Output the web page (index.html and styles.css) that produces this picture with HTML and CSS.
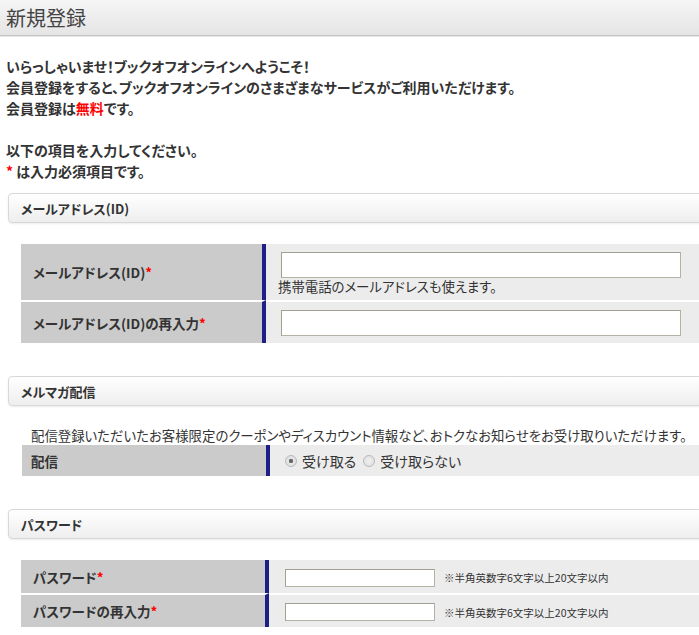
FILE: index.html
```html
<!DOCTYPE html>
<html lang="ja">
<head>
<meta charset="utf-8">
<title>新規登録</title>
<link rel="stylesheet" href="styles.css">
</head>
<body>
<header class="page-head">
  <h1 class="page-title">新規登録</h1>
</header>

<div class="intro">
  <p>いらっしゃいませ！ブックオフオンラインへようこそ！<br>会員登録をすると、ブックオフオンラインのさまざまなサービスがご利用いただけます。<br>会員登録は<span class="red">無料</span>です。</p>
  <p>以下の項目を入力してください。<br><span class="req">*</span> は入力必須項目です。</p>
</div>

<section class="section section-mail">
  <h2 class="section-head">メールアドレス(ID)</h2>
  <table class="form-table table-mail">
    <tr class="row-mail">
      <th class="label">メールアドレス(ID)<span class="req">*</span></th>
      <td class="field"><input class="input-wide" type="text"><p class="help">携帯電話のメールアドレスも使えます。</p></td>
    </tr>
    <tr class="row-mail2">
      <th class="label">メールアドレス(ID)の再入力<span class="req">*</span></th>
      <td class="field"><input class="input-wide" type="text"></td>
    </tr>
  </table>
</section>

<section class="section section-magazine">
  <h2 class="section-head">メルマガ配信</h2>
  <p class="desc">配信登録いただいたお客様限定のクーポンやディスカウント情報など、おトクなお知らせをお受け取りいただけます。</p>
  <table class="form-table table-magazine">
    <tr class="row-radio">
      <th class="label">配信</th>
      <td class="field">
        <label class="radio"><input type="radio" name="mag" checked>受け取る</label>
        <label class="radio"><input type="radio" name="mag">受け取らない</label>
      </td>
    </tr>
  </table>
</section>

<section class="section section-pass">
  <h2 class="section-head">パスワード</h2>
  <table class="form-table table-pass">
    <tr class="row-pass">
      <th class="label">パスワード<span class="req">*</span></th>
      <td class="field"><input class="input-short" type="password"><span class="note">※半角英数字6文字以上20文字以内</span></td>
    </tr>
    <tr class="row-pass">
      <th class="label">パスワードの再入力<span class="req">*</span></th>
      <td class="field"><input class="input-short" type="password"><span class="note">※半角英数字6文字以上20文字以内</span></td>
    </tr>
  </table>
</section>
</body>
</html>
```

FILE: styles.css
```css
html, body {
  margin: 0;
  padding: 0;
  overflow: hidden;
  background: #fff;
}
body {
  font-family: "Noto Sans CJK JP", "Noto Sans", sans-serif;
  color: #333;
  font-size: 13px;
  font-feature-settings: "palt";
}

.page-head {
  height: 35px;
  background: linear-gradient(#f5f5f5, #e5e5e5);
  border-bottom: 1px solid #c4c4c4;
  box-shadow: 0 1px 0 #e6e6e6;
  display: flex;
  align-items: center;
}
.page-title {
  margin: 0 0 0 6px;
  font-size: 20px;
  font-weight: normal;
  color: #444;
  line-height: 1;
}

.intro {
  margin: 20px 0 0 6px;
  font-size: 14px;
  font-weight: bold;
  line-height: 21px;
}
.intro p {
  margin: 0 0 21px;
}
.intro p:last-child { margin-bottom: 0; }

.red, .req { color: #f00; }
.req { font-weight: bold; }

.section {
  padding-left: 8px;
}
.section-mail { margin-top: 11px; }
.section-magazine { margin-top: 33px; }
.section-pass { margin-top: 33px; }

.section-head {
  margin: 0 -10px 0 0;
  height: 30px;
  box-sizing: border-box;
  border: 1px solid #d8d8d8;
  border-radius: 4px;
  background: linear-gradient(#fff, #eeeeee);
  box-shadow: 0 1px 2px rgba(0,0,0,0.08);
  font-size: 13px;
  font-weight: bold;
  display: flex;
  align-items: center;
  padding-left: 12px;
}

.form-table {
  border-collapse: separate;
  border-spacing: 0;
  margin-left: 13px;
  width: calc(100% - 13px);
}
.table-mail { margin-top: 21px; }
.table-pass { margin-top: 21px; }

.label {
  background: #cbcbcb;
  border-right: 4px solid #1d1f86;
  text-align: left;
  font-weight: bold;
  font-size: 13.5px;
  padding: 0 0 0 12px;
  vertical-align: middle;
  white-space: nowrap;
  box-sizing: border-box;
}
.field {
  background: #ececec;
  vertical-align: middle;
  padding: 0 0 0 15px;
  box-sizing: border-box;
}
tr + tr > .label, tr + tr > .field {
  border-top: 2px solid #fff;
}

.table-mail .label { width: 245px; }
.row-mail > th, .row-mail > td { height: 56px; }
.row-mail .field { padding-top: 8px; padding-bottom: 6px; }
.row-mail2 > th, .row-mail2 > td { height: 43px; }

.input-wide {
  display: block;
  width: 400px;
  height: 26px;
  box-sizing: border-box;
  border: 1px solid #b5b1a5;
  border-top-color: #a39f92;
  border-left-color: #a39f92;
  background: #fff;
  margin: 0;
}
.help {
  margin: 0 0 0 -3px;
  font-size: 13.4px;
  line-height: 16px;
}

.desc {
  margin: 19px 0 0 23px;
  font-size: 13.4px;
  line-height: 20px;
  white-space: nowrap;
}

.table-magazine { margin-left: 14px; width: calc(100% - 14px); }
.table-magazine .label { width: 248px; padding-left: 9px; }
.row-radio > th, .row-radio > td { height: 31px; }
.row-radio .field { padding-left: 15px; font-size: 14px; }
.radio {
  display: inline-flex;
  align-items: center;
  margin-right: 4px;
}
.radio input {
  appearance: none;
  -webkit-appearance: none;
  width: 12px;
  height: 12px;
  margin: 0 5px 0 0;
  border: 1px solid #b9b9b9;
  border-radius: 50%;
  background: radial-gradient(circle, #f0f0f0 0, #dcdcdc 100%);
  box-sizing: border-box;
}
.radio input:checked {
  background: radial-gradient(circle, #555 0, #777 2px, #e6e6e6 2.5px, #dcdcdc 100%);
}

.table-pass .label { width: 248px; }
.row-pass > th, .row-pass > td { height: 33px; }
.row-pass + .row-pass > th, .row-pass + .row-pass > td { height: 34px; }
.row-pass .field { padding-left: 16px; }
.input-short {
  width: 150px;
  height: 18px;
  box-sizing: border-box;
  border: 1px solid #b5b1a5;
  border-top-color: #a39f92;
  border-left-color: #a39f92;
  background: #fff;
  margin: 0;
  vertical-align: middle;
}
.note {
  font-size: 10.5px;
  margin-left: 9px;
  vertical-align: middle;
}
```
